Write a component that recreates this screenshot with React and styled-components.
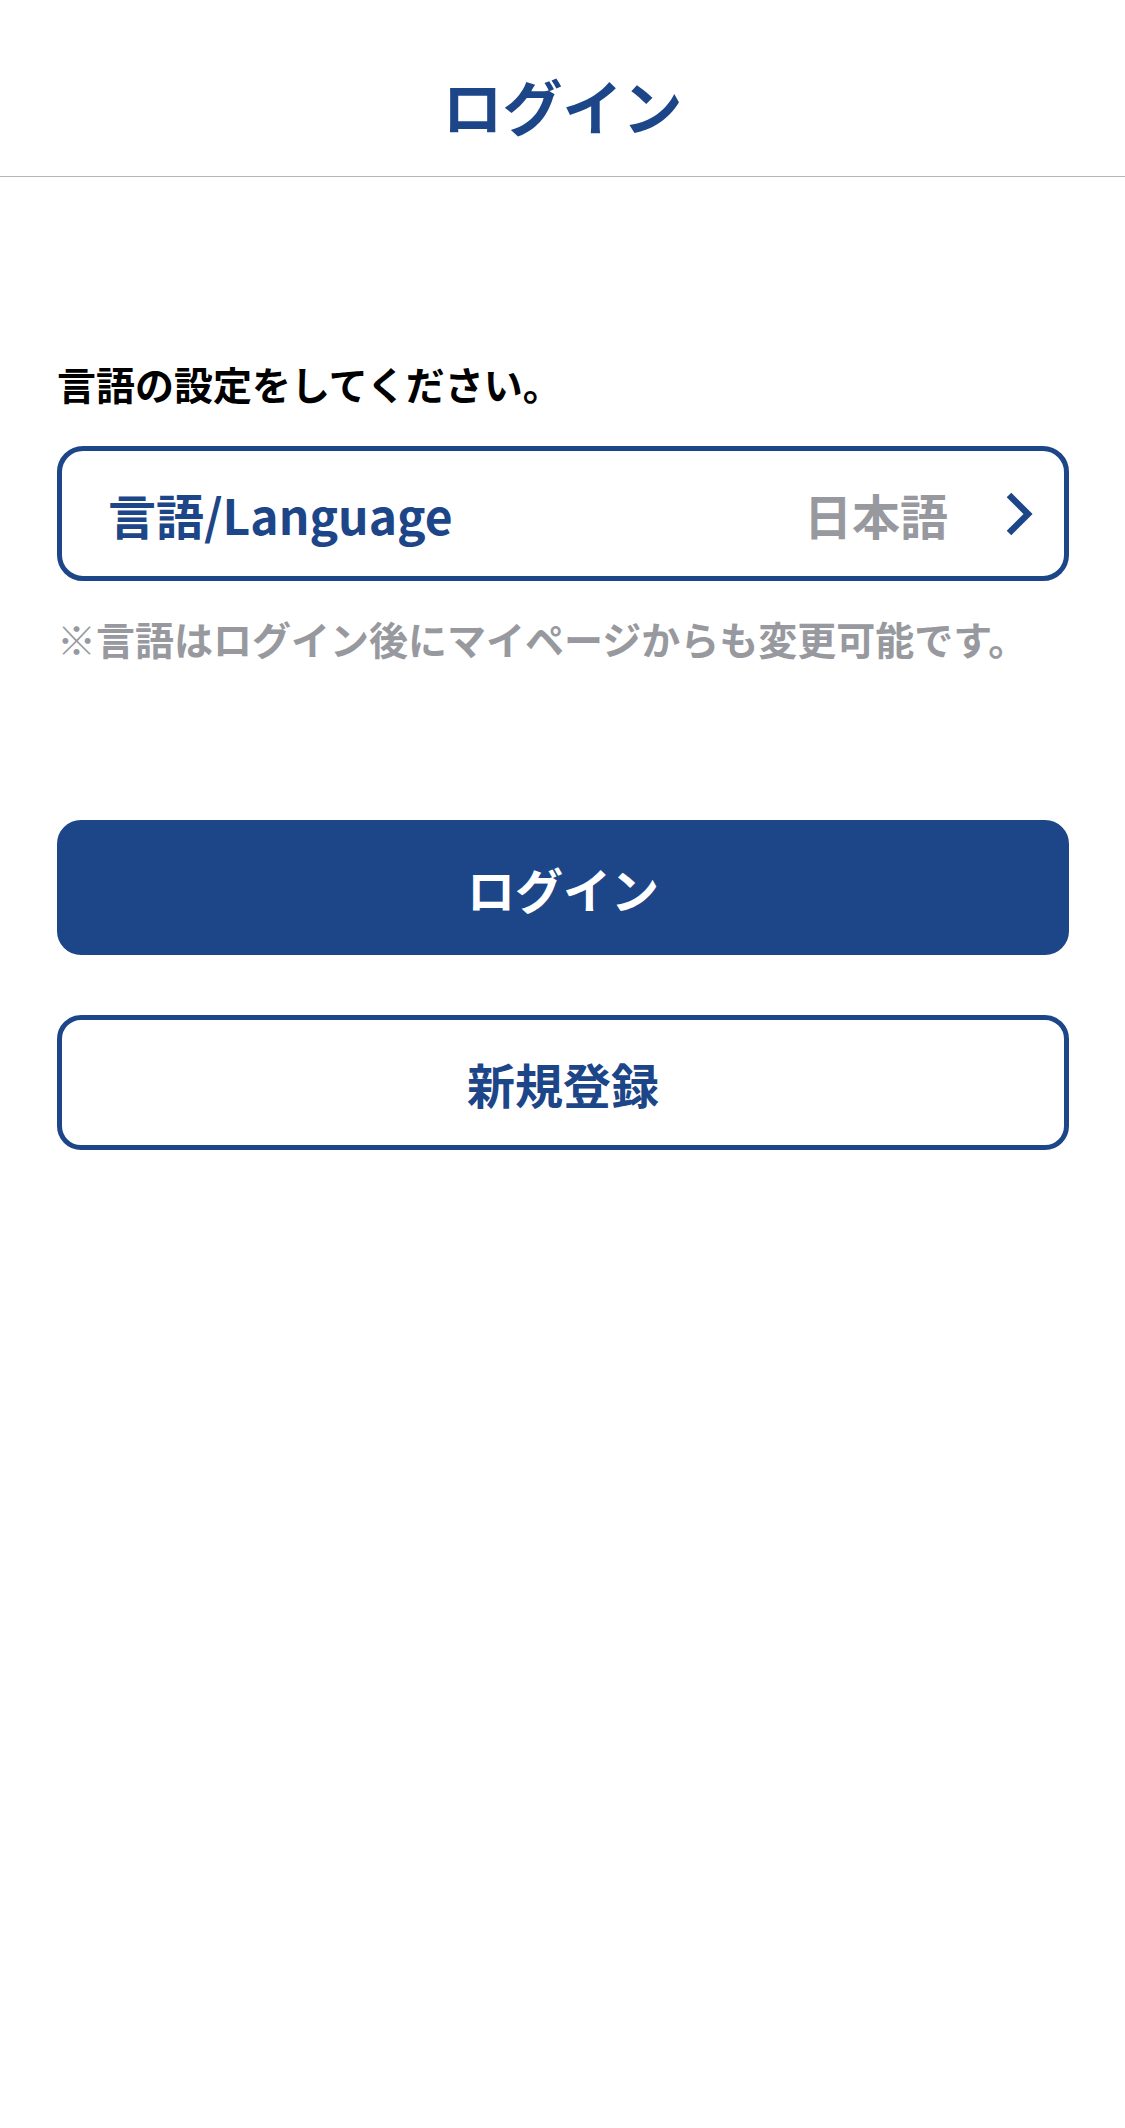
import React from "react";
import styled, { createGlobalStyle } from "styled-components";

const BLUE = "#1d4689";
const GRAY = "#97999e";

const Global = createGlobalStyle`
  html, body { margin: 0; padding: 0; background: #fff; }
  body { font-family: "Noto Sans CJK JP", "Noto Sans", sans-serif; }
  * { box-sizing: border-box; }
`;

const Page = styled.div`
  width: 1125px;
  min-height: 2128px;
  background: #fff;
`;

const Header = styled.header`
  height: 177px;
  border-bottom: 1.5px solid #b5b5b5;
  display: flex;
  align-items: center;
  justify-content: center;
  padding-top: 34px;
`;

const Title = styled.h1`
  margin: 0;
  font-size: 60px;
  font-weight: 700;
  line-height: 1;
  color: ${BLUE};
`;

const Content = styled.main`
  padding: 187px 56px 0 57px;
  display: flex;
  flex-direction: column;
`;

const Label = styled.p`
  margin: 0;
  font-size: 39px;
  font-weight: 700;
  line-height: 1;
  color: #000;
`;

const SelectRow = styled.button`
  margin-top: 43px;
  height: 135px;
  width: 100%;
  border: 5px solid ${BLUE};
  border-radius: 26px;
  background: #fff;
  display: flex;
  align-items: center;
  padding: 0 30px 0 46px;
  font-family: inherit;
  cursor: pointer;
`;

const SelectLabel = styled.span`
  flex: 1;
  text-align: left;
  font-size: 48px;
  font-weight: 700;
  color: ${BLUE};
  line-height: 1;
`;

const SelectValue = styled.span`
  font-size: 48px;
  font-weight: 700;
  color: ${GRAY};
  line-height: 1;
  margin-right: 56px;
`;

const Note = styled.p`
  margin: 38px 0 0;
  font-size: 39px;
  font-weight: 700;
  line-height: 1;
  color: ${GRAY};
`;

const Button = styled.button`
  width: 100%;
  height: 135px;
  border-radius: 24px;
  border: 5px solid ${BLUE};
  background: ${(p) => (p.$primary ? BLUE : "#fff")};
  color: ${(p) => (p.$primary ? "#fff" : BLUE)};
  font-family: inherit;
  font-size: 48px;
  font-weight: 700;
  line-height: 1;
  margin-top: ${(p) => p.$mt}px;
  cursor: pointer;
`;

const Chevron = () => (
  <svg width="30" height="46" viewBox="0 0 30 46" fill="none">
    <path d="M5 4 L24 23 L5 42" stroke={BLUE} strokeWidth="6.5" strokeLinecap="butt" strokeLinejoin="miter" />
  </svg>
);

export default function App() {
  return (
    <Page>
      <Global />
      <Header>
        <Title>ログイン</Title>
      </Header>
      <Content>
        <Label>言語の設定をしてください。</Label>
        <SelectRow>
          <SelectLabel>言語/Language</SelectLabel>
          <SelectValue>日本語</SelectValue>
          <Chevron />
        </SelectRow>
        <Note>※言語はログイン後にマイページからも変更可能です。</Note>
        <Button $primary $mt={162}>ログイン</Button>
        <Button $mt={60}>新規登録</Button>
      </Content>
    </Page>
  );
}
